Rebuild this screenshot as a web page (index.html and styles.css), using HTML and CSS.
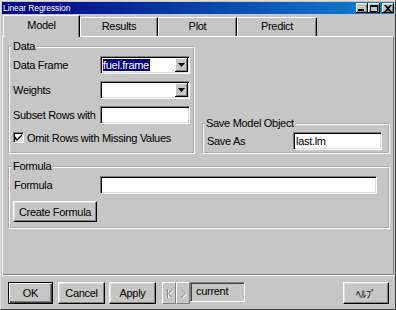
FILE: index.html
```
<!DOCTYPE html>
<html>
<head>
<meta charset="utf-8">
<link rel="stylesheet" href="styles.css">
</head>
<body>
<div class="window">
  <div class="titlebar">
    <span class="title">Linear Regression</span>
    <div class="tb-buttons">
      <span class="tb-btn"><svg width="6" height="2" viewBox="0 0 6 2"><rect width="6" height="2" fill="#000"/></svg></span>
      <span class="tb-btn"><svg width="8" height="7" viewBox="0 0 8 7"><path d="M0 0h8v7H0z M1 2v4h6V2z" fill="#000" fill-rule="evenodd"/></svg></span>
      <span class="tb-btn close"><svg width="8" height="7" viewBox="0 0 8 7"><path d="M0 0h2l2 2 2-2h2L5 3.5 8 7H6L4 5 2 7H0l3-3.5z" fill="#000"/></svg></span>
    </div>
  </div>
  <div class="tabs">
    <div class="tab active t1">Model</div>
    <div class="tab t2">Results</div>
    <div class="tab t3">Plot</div>
    <div class="tab t4">Predict</div>
  </div>
  <div class="panel">
    <div class="top-row">
      <fieldset class="group data">
        <legend>Data</legend>
        <div class="form-grid">
          <span class="lbl">Data Frame</span>
          <div class="combo"><span class="combo-text"><span class="sel">fuel.frame</span></span><span class="drop"><svg width="7" height="4" viewBox="0 0 7 4"><path d="M0 0h7L3.5 4z" fill="#000"/></svg></span></div>
          <span class="lbl">Weights</span>
          <div class="combo"><span class="combo-text"></span><span class="drop"><svg width="7" height="4" viewBox="0 0 7 4"><path d="M0 0h7L3.5 4z" fill="#000"/></svg></span></div>
          <span class="lbl">Subset Rows with</span>
          <div class="field"></div>
          <div class="check-row"><span class="checkbox"><svg width="7" height="7" viewBox="0 0 7 7"><path d="M0 2v3l2 2 5-5V0L2 5z" fill="#000"/></svg></span><span>Omit Rows with Missing Values</span></div>
        </div>
      </fieldset>
      <fieldset class="group save">
        <legend>Save Model Object</legend>
        <div class="save-row"><span class="lbl">Save As</span><div class="field save-field">last.lm</div></div>
      </fieldset>
    </div>
    <fieldset class="group formula">
      <legend>Formula</legend>
      <div class="formula-row"><span class="lbl">Formula</span><div class="field formula-field"></div></div>
      <button class="btn create">Create Formula</button>
    </fieldset>
  </div>
  <div class="footer">
    <button class="btn default ok">OK</button>
    <button class="btn cancel">Cancel</button>
    <button class="btn apply">Apply</button>
    <div class="nav">
      <button class="btn nav-btn"><svg width="7" height="9" viewBox="0 0 7 9"><path d="M1.5 0v9M6 0.5L2.5 4.5 6 8.5" stroke="#fff" fill="none" transform="translate(1 1)"/><path d="M1.5 0v9M6 0.5L2.5 4.5 6 8.5" stroke="#8a8a8a" fill="none"/></svg></button>
      <button class="btn nav-btn"><svg width="7" height="9" viewBox="0 0 7 9"><path d="M1.5 0.5L5 4.5 1.5 8.5" stroke="#fff" fill="none" transform="translate(1 1)"/><path d="M1.5 0.5L5 4.5 1.5 8.5" stroke="#8a8a8a" fill="none"/></svg></button>
    </div>
    <div class="current">current</div>
    <button class="btn help">ﾍﾙﾌﾟ</button>
  </div>
</div>
</body>
</html>
```
FILE: styles.css
```
* { box-sizing: border-box; }
html, body { margin: 0; padding: 0; }
body {
  width: 396px;
  height: 310px;
  overflow: hidden;
  background: #c6c6c6;
  font-family: "Liberation Sans", Arial, sans-serif;
  font-size: 11px;
  letter-spacing: -0.3px;
  color: #000;
}
.window {
  width: 396px;
  height: 310px;
  border: 1px solid;
  border-color: #dfdfdf #404040 #404040 #dfdfdf;
  padding: 1px;
  background: #c6c6c6;
  display: flex;
  flex-direction: column;
}
.titlebar {
  height: 12px;
  flex: none;
  display: flex;
  align-items: center;
  justify-content: space-between;
  background: linear-gradient(90deg, #000080, #1084d0);
  padding-left: 1px;
}
.title {
  color: #fff;
  font-size: 8.5px;
  letter-spacing: -0.1px;
  line-height: 12px;
}
.tb-buttons { display: flex; }
.tb-btn {
  width: 12px;
  height: 10px;
  background: #c6c6c6;
  box-shadow: inset -1px -1px #000, inset 1px 1px #fff, inset -2px -2px #808080;
  display: flex;
  align-items: center;
  justify-content: center;
}
.tb-btn:first-child svg { margin-top: 4px; margin-left: -2px; }
.tb-btn.close { margin-left: 2px; }
.tabs {
  height: 23px;
  flex: none;
  display: flex;
  align-items: flex-end;
  padding-left: 1px;
  margin-bottom: -1px;
  position: relative;
  z-index: 1;
}
.tab {
  height: 19px;
  margin-bottom: 1px;
  border-left: 1px solid #fff;
  border-top: 1px solid #fff;
  border-right: 1px solid #000;
  box-shadow: inset -1px 0 #808080;
  display: flex;
  align-items: center;
  justify-content: center;
  padding-bottom: 2px;
  background: #c6c6c6;
}
.tab.active { height: 22px; margin-bottom: 0; padding-bottom: 4px; }
.t1 { width: 77px; }
.t2 { width: 78px; }
.t3 { width: 79px; }
.t4 { width: 80px; }
.panel {
  flex: 1;
  border-top: 1px solid #fff;
  border-left: 1px solid #fff;
  border-right: 1px solid #808080;
  border-bottom: 1px solid #808080;
  padding: 3px 3px 0 5px;
  display: flex;
  flex-direction: column;
}
.top-row {
  display: flex;
  align-items: flex-end;
  gap: 7px;
}
.group {
  margin: 0;
  min-width: 0;
  border: 2px groove #fff;
}
.group legend {
  padding: 0 2px;
  margin-left: -2px;
  line-height: 13px;
  height: 13px;
}
.data { width: 187px; padding: 0 3px 8px 3px; }
.save { flex: 1; padding: 2px 6px 2px 2px; }
.formula { margin-top: 6px; padding: 0 3px 5px 3px; }
.form-grid {
  display: grid;
  grid-template-columns: 87px 90px;
  row-gap: 7px;
  padding-top: 3px;
  align-items: center;
}
.lbl { line-height: 18px; }
.field {
  height: 18px;
  background: #fff;
  border: 1px solid;
  border-color: #808080 #fff #fff #808080;
  box-shadow: inset 1px 1px #000, inset -1px -1px #dfdfdf;
  padding: 0 2px;
  line-height: 16px;
}
.combo {
  width: 90px;
  height: 18px;
  display: flex;
  background: #fff;
  border: 1px solid;
  border-color: #808080 #fff #fff #808080;
  box-shadow: inset 1px 1px #000, inset -1px -1px #dfdfdf;
  padding: 1px;
}
.combo-text {
  flex: 1;
  display: flex;
  align-items: center;
  padding-left: 1px;
}
.sel {
  background: #000080;
  color: #fff;
  line-height: 12px;
  padding: 0 1px 0 0;
}
.drop {
  width: 13px;
  height: 14px;
  background: #c6c6c6;
  box-shadow: inset -1px -1px #000, inset 1px 1px #fff, inset -2px -2px #808080;
  display: flex;
  align-items: center;
  justify-content: center;
}
.check-row {
  grid-column: 1 / -1;
  display: flex;
  align-items: center;
  height: 13px;
}
.checkbox {
  width: 11px;
  height: 11px;
  background: #fff;
  border: 1px solid;
  border-color: #808080 #fff #fff #808080;
  box-shadow: inset 1px 1px #000, inset -1px -1px #dfdfdf;
  display: flex;
  align-items: center;
  justify-content: center;
  margin-right: 3px;
}
.checkbox svg { flex: none; }
.save-row, .formula-row {
  display: flex;
  align-items: center;
}
.save-row .lbl, .formula-row .lbl { width: 87px; padding-left: 1px; }
.save-row { padding-top: 0; }
.save-field { width: 89px; }
.formula-row { padding-top: 3px; }
.formula-field { width: 277px; }
.btn {
  font: inherit;
  letter-spacing: inherit;
  height: 22px;
  padding: 0;
  margin: 0;
  background: #c6c6c6;
  border: 1px solid;
  border-color: #fff #000 #000 #fff;
  box-shadow: inset -1px -1px #808080, inset 1px 1px #dfdfdf;
  color: #000;
  display: flex;
  align-items: center;
  justify-content: center;
}
.btn.default {
  border-color: #000;
  box-shadow: inset 1px 1px #fff, inset -1px -1px #404040, inset -2px -2px #808080;
}
.create { width: 84px; height: 21px; margin-top: 7px; }
.footer {
  flex: none;
  height: 33px;
  display: flex;
  align-items: flex-start;
  padding: 7px 5px 4px 6px;
  box-shadow: inset 0 1px #fff;
}
.ok { width: 45px; }
.cancel { width: 47px; margin-left: 5px; }
.apply { width: 47px; margin-left: 4px; }
.nav { display: flex; margin-left: 6px; }
.nav-btn {
  width: 14px;
  border-color: #fff #808080 #808080 #fff;
  box-shadow: none;
}
.current {
  width: 55px;
  height: 20px;
  border: 1px solid;
  border-color: #808080 #fff #fff #808080;
  box-shadow: inset 1px 1px #404040;
  padding-left: 5px;
  line-height: 17px;
}
.help {
  width: 46px;
  margin-left: auto;
  font-family: "Noto Sans CJK JP", sans-serif;
  font-size: 10px;
  letter-spacing: 0;
}
```
